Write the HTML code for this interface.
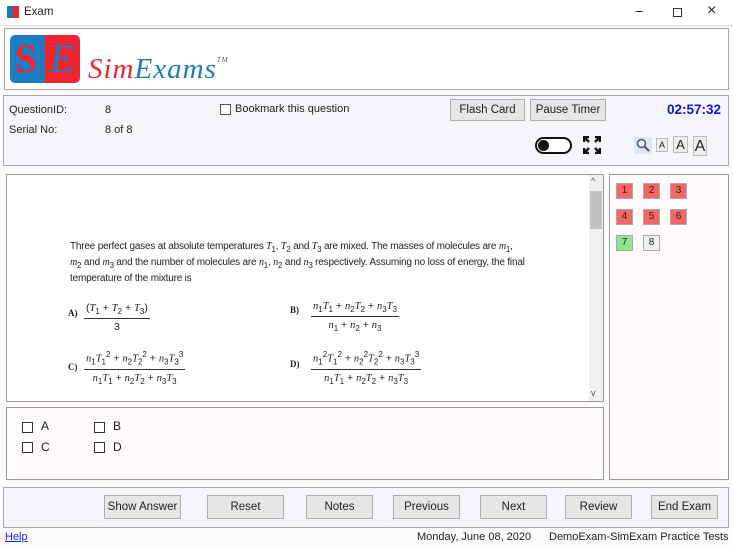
<!DOCTYPE html>
<html><head><style>
*{box-sizing:border-box;margin:0;padding:0}
body{width:733px;height:546px;position:relative;background:#fcfbfb;font-family:"Liberation Sans",sans-serif;font-size:12px;color:#222;overflow:hidden}
.a{position:absolute}
.btn{position:absolute;background:#e6e6e6;border:1px solid #adadad;font-size:11.5px;text-align:center;color:#222}
.nb{position:absolute;width:17px;height:16px;border:1px solid #aaa;font-size:10px;text-align:center;line-height:14px;color:#222}
.cb{position:absolute;width:11px;height:11px;border:1px solid #333;background:#fff}
i{font-family:"Liberation Serif",serif}
.q{font-size:10px;letter-spacing:-.2px}
.fr{position:absolute;text-align:center;font-size:10.5px;font-family:"Liberation Sans",sans-serif}
.fr .n{border-bottom:1px solid #333;padding:0 2px 2px}
.fr .d{padding-top:2px}
sub,sup{font-size:8px}
</style></head><body>
<!-- title bar -->
<div class="a" style="left:0;top:0;width:733px;height:26px;background:#fff;border-bottom:1px solid #ddd"></div>
<div class="a" style="left:7px;top:6px;width:6px;height:12px;background:#1a7ac0"></div>
<div class="a" style="left:13px;top:6px;width:6px;height:12px;background:#e8262e"></div>
<div class="a" style="left:24px;top:6px;font-size:11.5px">Exam</div>
<div class="a" style="left:635px;top:3px;font-size:14px">−</div>
<div class="a" style="left:673px;top:8px;width:9px;height:9px;border:1px solid #333"></div>
<div class="a" style="left:707px;top:2px;font-size:16px">×</div>
<!-- logo panel -->
<div class="a" style="left:4px;top:28px;width:725px;height:62px;background:#fff;border:1px solid #aaa"></div>
<div class="a" style="left:10px;top:35px;width:70px;height:48px;border-radius:5px;overflow:hidden;background:linear-gradient(90deg,#1b7ec2 50%,#ef2430 50%)">
<div class="a" style="left:5px;top:0;font-size:40px;font-weight:bold;color:#ef2430;font-family:'Liberation Serif',serif">S</div>
<div class="a" style="left:40px;top:0;font-size:40px;font-style:italic;color:#1b7ec2;font-family:'Liberation Serif',serif">E</div></div>
<div class="a" style="left:88px;top:53px;font-size:29px;font-family:'Liberation Serif',serif;font-style:italic;letter-spacing:1px"><span style="color:#e8262e">Sim</span><span style="color:#1d7bb8">Exams</span><sup style="font-size:7px;color:#555;vertical-align:16px">TM</sup></div>
<!-- info panel -->
<div class="a" style="left:3px;top:95px;width:726px;height:71px;background:#f5f6fd;border:1px solid #aaa"></div>
<div class="a" style="left:9px;top:104px;font-size:11px">QuestionID:</div>
<div class="a" style="left:105px;top:104px;font-size:11px">8</div>
<div class="a" style="left:9px;top:124px;font-size:11px">Serial No:</div>
<div class="a" style="left:105px;top:124px;font-size:11px">8 of 8</div>
<div class="cb" style="left:220px;top:104px;border-color:#555"></div>
<div class="a" style="left:235px;top:103px;font-size:11px">Bookmark this question</div>
<div class="btn" style="left:450px;top:99px;width:75px;height:22px;line-height:20px">Flash Card</div>
<div class="btn" style="left:530px;top:99px;width:76px;height:22px;line-height:20px">Pause Timer</div>
<div class="a" style="left:667px;top:102px;font-size:13.5px;font-weight:bold;color:#1010e0">02:57:32</div>
<div class="a" style="left:535px;top:137px;width:37px;height:17px;border:2px solid #111;border-radius:9px;background:#fff"><div class="a" style="left:1px;top:1px;width:11px;height:11px;border-radius:50%;background:#111"></div></div>
<svg class="a" style="left:583px;top:136px" width="18" height="18" viewBox="0 0 18 18" stroke="#111" stroke-width="2.5" fill="none"><path d="M1 6V1h5M12 1h5v5M17 12v5h-5M6 17H1v-5M2 2l4 4M16 2l-4 4M16 16l-4-4M2 16l4-4"/></svg>
<div class="a" style="left:634px;top:137px;width:18px;height:17px;background:#dde6f5"></div>
<svg class="a" style="left:636px;top:138px" width="14" height="14"><circle cx="5.5" cy="5.5" r="4" stroke="#557" stroke-width="1.5" fill="#eef"/><path d="M8.5 8.5l4.5 4.5" stroke="#555" stroke-width="2"/></svg>
<div class="a" style="left:656px;top:138px;width:12px;height:14px;border:1px solid #bbb;background:#eee;font-size:9px;text-align:center;line-height:13px">A</div>
<div class="a" style="left:673px;top:136px;width:15px;height:17px;border:1px solid #bbb;background:#eee;font-size:13px;text-align:center;line-height:16px">A</div>
<div class="a" style="left:693px;top:136px;width:14px;height:20px;border:1px solid #bbb;background:#eee;font-size:16px;text-align:center;line-height:20px">A</div>
<!-- question panel -->
<div class="a" style="left:6px;top:174px;width:598px;height:228px;background:#fff;border:1px solid #999"></div>
<div class="a" style="left:589px;top:175px;width:14px;height:226px;background:#f0f0f0"></div>
<div class="a" style="left:590px;top:191px;width:12px;height:38px;background:#c1c1c1"></div>
<div class="a" style="left:591px;top:176px;font-size:9px;color:#555">^</div>
<div class="a" style="left:591px;top:388px;font-size:9px;color:#555">v</div>
<div class="a q" style="left:70px;top:240px;width:480px;line-height:13px">Three perfect gases at absolute temperatures <i>T</i><sub>1</sub>, <i>T</i><sub>2</sub> and <i>T</i><sub>3</sub> are mixed. The masses of molecules are <i>m</i><sub>1</sub>,<br><i>m</i><sub>2</sub> and <i>m</i><sub>3</sub> and the number of molecules are <i>n</i><sub>1</sub>, <i>n</i><sub>2</sub> and <i>n</i><sub>3</sub> respectively. Assuming no loss of energy, the final<br>temperature of the mixture is</div>
<div class="a" style="left:68px;top:308px;font-size:9px;font-weight:bold;font-family:'Liberation Serif',serif">A)</div>
<div class="fr" style="left:84px;top:302px"><div class="n">(<i>T</i><sub>1</sub> + <i>T</i><sub>2</sub> + <i>T</i><sub>3</sub>)</div><div class="d">3</div></div>
<div class="a" style="left:290px;top:305px;font-size:9px;font-weight:bold;font-family:'Liberation Serif',serif">B)</div>
<div class="fr" style="left:311px;top:300px"><div class="n"><i>n</i><sub>1</sub><i>T</i><sub>1</sub> + <i>n</i><sub>2</sub><i>T</i><sub>2</sub> + <i>n</i><sub>3</sub><i>T</i><sub>3</sub></div><div class="d"><i>n</i><sub>1</sub> + <i>n</i><sub>2</sub> + <i>n</i><sub>3</sub></div></div>
<div class="a" style="left:68px;top:362px;font-size:9px;font-weight:bold;font-family:'Liberation Serif',serif">C)</div>
<div class="fr" style="left:84px;top:350px"><div class="n"><i>n</i><sub>1</sub><i>T</i><sub>1</sub><sup>2</sup> + <i>n</i><sub>2</sub><i>T</i><sub>2</sub><sup>2</sup> + <i>n</i><sub>3</sub><i>T</i><sub>3</sub><sup>3</sup></div><div class="d"><i>n</i><sub>1</sub><i>T</i><sub>1</sub> + <i>n</i><sub>2</sub><i>T</i><sub>2</sub> + <i>n</i><sub>3</sub><i>T</i><sub>3</sub></div></div>
<div class="a" style="left:290px;top:359px;font-size:9px;font-weight:bold;font-family:'Liberation Serif',serif">D)</div>
<div class="fr" style="left:311px;top:350px"><div class="n"><i>n</i><sub>1</sub><sup>2</sup><i>T</i><sub>1</sub><sup>2</sup> + <i>n</i><sub>2</sub><sup>2</sup><i>T</i><sub>2</sub><sup>2</sup> + <i>n</i><sub>3</sub><i>T</i><sub>3</sub><sup>3</sup></div><div class="d"><i>n</i><sub>1</sub><i>T</i><sub>1</sub> + <i>n</i><sub>2</sub><i>T</i><sub>2</sub> + <i>n</i><sub>3</sub><i>T</i><sub>3</sub></div></div>
<!-- answer panel -->
<div class="a" style="left:6px;top:407px;width:598px;height:73px;background:#fffbfa;border:1px solid #999"></div>
<div class="cb" style="left:22px;top:422px"></div><div class="a" style="left:41px;top:419px">A</div>
<div class="cb" style="left:94px;top:422px"></div><div class="a" style="left:113px;top:419px">B</div>
<div class="cb" style="left:22px;top:442px"></div><div class="a" style="left:41px;top:440px">C</div>
<div class="cb" style="left:94px;top:442px"></div><div class="a" style="left:113px;top:440px">D</div>
<!-- nav panel -->
<div class="a" style="left:609px;top:174px;width:120px;height:306px;background:#fffbfa;border:1px solid #999"></div>
<div class="nb" style="left:616px;top:183px;background:#f86565">1</div>
<div class="nb" style="left:643px;top:183px;background:#f86565">2</div>
<div class="nb" style="left:670px;top:183px;background:#f86565">3</div>
<div class="nb" style="left:616px;top:209px;background:#f86565">4</div>
<div class="nb" style="left:643px;top:209px;background:#f86565">5</div>
<div class="nb" style="left:670px;top:209px;background:#f86565">6</div>
<div class="nb" style="left:616px;top:235px;background:#8de88d">7</div>
<div class="nb" style="left:643px;top:235px;background:#f0f0f0">8</div>
<!-- bottom -->
<div class="a" style="left:3px;top:487px;width:726px;height:41px;background:#f5f6fd;border:1px solid #aaa"></div>
<div class="btn" style="left:104px;top:495px;width:77px;height:24px;line-height:22px">Show Answer</div>
<div class="btn" style="left:207px;top:495px;width:77px;height:24px;line-height:22px">Reset</div>
<div class="btn" style="left:306px;top:495px;width:67px;height:24px;line-height:22px">Notes</div>
<div class="btn" style="left:393px;top:495px;width:67px;height:24px;line-height:22px">Previous</div>
<div class="btn" style="left:480px;top:495px;width:67px;height:24px;line-height:22px">Next</div>
<div class="btn" style="left:565px;top:495px;width:67px;height:24px;line-height:22px">Review</div>
<div class="btn" style="left:651px;top:495px;width:67px;height:24px;line-height:22px">End Exam</div>
<div class="a" style="left:5px;top:531px;font-size:11px;color:#1a1aff;text-decoration:underline">Help</div>
<div class="a" style="left:417px;top:531px;font-size:11px">Monday, June 08, 2020</div>
<div class="a" style="left:549px;top:531px;font-size:11px">DemoExam-SimExam Practice Tests</div>
</body></html>
